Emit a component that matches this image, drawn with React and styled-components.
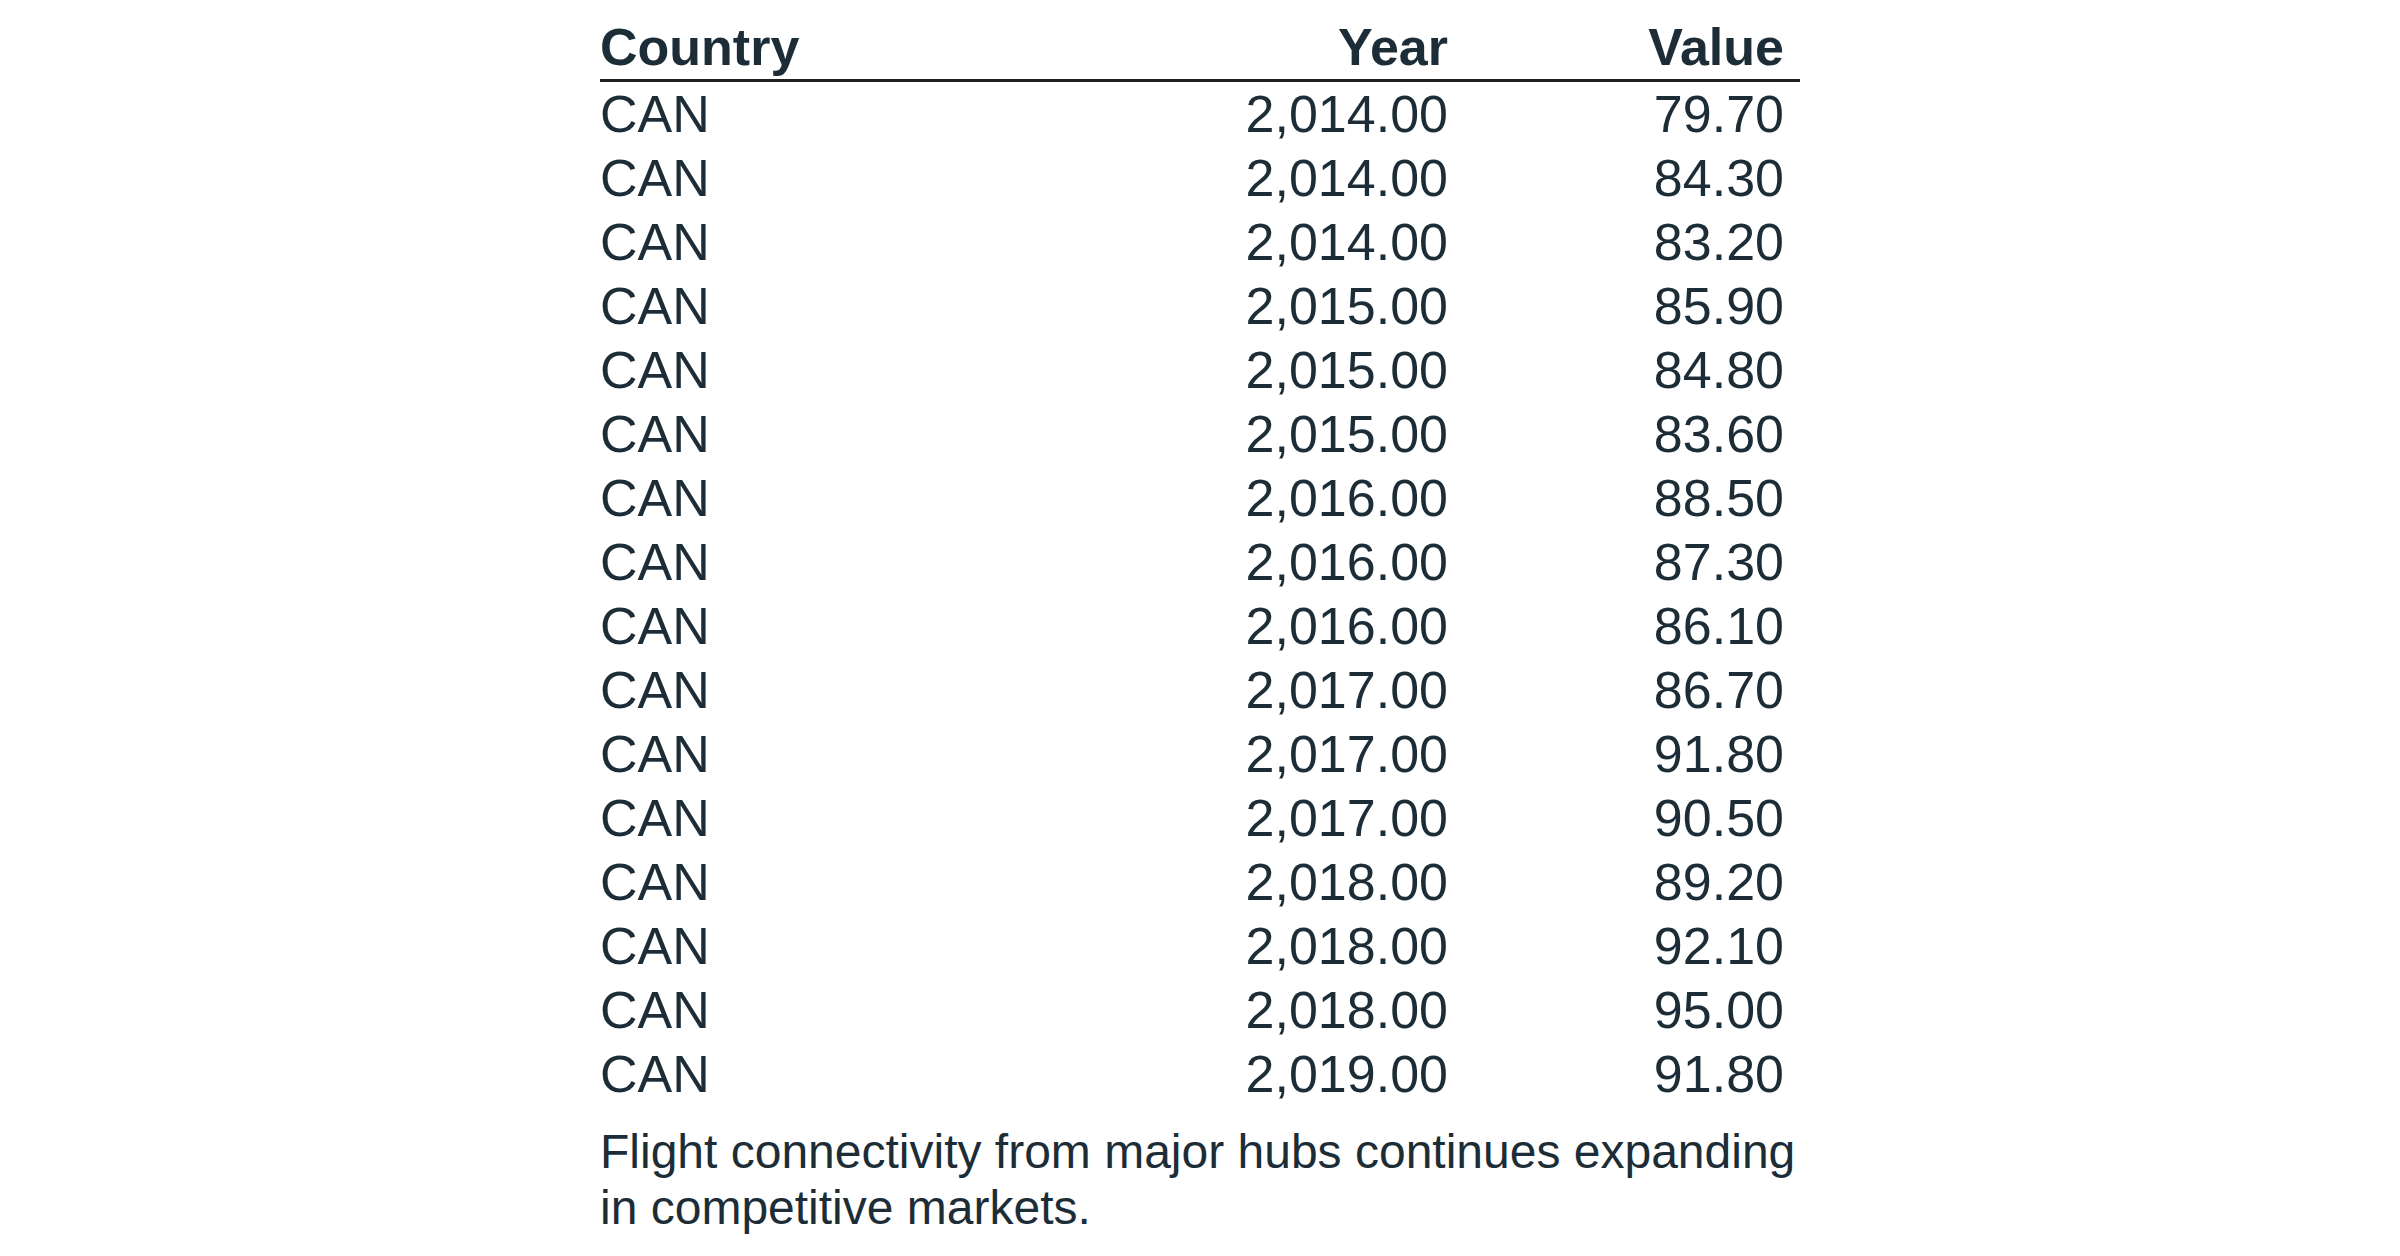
import React from 'react';
import styled, { createGlobalStyle } from 'styled-components';

const GlobalStyle = createGlobalStyle`
  html, body {
    margin: 0;
    padding: 0;
    background: #fff;
  }
  body {
    font-family: 'Liberation Sans', Arial, sans-serif;
    color: #1d2d37;
  }
`;

const Page = styled.div`
  display: flex;
  justify-content: center;
  padding-top: 15px;
`;

const Figure = styled.figure`
  margin: 0;
  width: 1200px;
`;

const Table = styled.div`
  display: grid;
  grid-template-columns: 1fr 336px 336px;
  font-size: 52px;
  line-height: 64px;
`;

const HeadCell = styled.div`
  font-weight: 700;
  text-align: ${({ align }) => align || 'left'};
  padding-right: ${({ align }) => (align === 'right' ? '16px' : '0')};
  border-bottom: 3.2px solid #1f1f1f;
`;

const Cell = styled.div`
  text-align: ${({ align }) => align || 'left'};
  padding-right: ${({ align }) => (align === 'right' ? '16px' : '0')};
`;

const Caption = styled.figcaption`
  margin-top: 18px;
  font-size: 48px;
  line-height: 56px;
`;

const rows = [
  ['CAN', '2,014.00', '79.70'],
  ['CAN', '2,014.00', '84.30'],
  ['CAN', '2,014.00', '83.20'],
  ['CAN', '2,015.00', '85.90'],
  ['CAN', '2,015.00', '84.80'],
  ['CAN', '2,015.00', '83.60'],
  ['CAN', '2,016.00', '88.50'],
  ['CAN', '2,016.00', '87.30'],
  ['CAN', '2,016.00', '86.10'],
  ['CAN', '2,017.00', '86.70'],
  ['CAN', '2,017.00', '91.80'],
  ['CAN', '2,017.00', '90.50'],
  ['CAN', '2,018.00', '89.20'],
  ['CAN', '2,018.00', '92.10'],
  ['CAN', '2,018.00', '95.00'],
  ['CAN', '2,019.00', '91.80'],
];

const App = () => {
  return (
    <Page>
      <GlobalStyle />
      <Figure>
        <Table>
          <HeadCell>Country</HeadCell>
          <HeadCell align="right">Year</HeadCell>
          <HeadCell align="right">Value</HeadCell>
          {rows.map(([country, year, value], i) => (
            <React.Fragment key={i}>
              <Cell>{country}</Cell>
              <Cell align="right">{year}</Cell>
              <Cell align="right">{value}</Cell>
            </React.Fragment>
          ))}
        </Table>
        <Caption>
          Flight connectivity from major hubs continues expanding in competitive markets.
        </Caption>
      </Figure>
    </Page>
  );
};

export default App;
